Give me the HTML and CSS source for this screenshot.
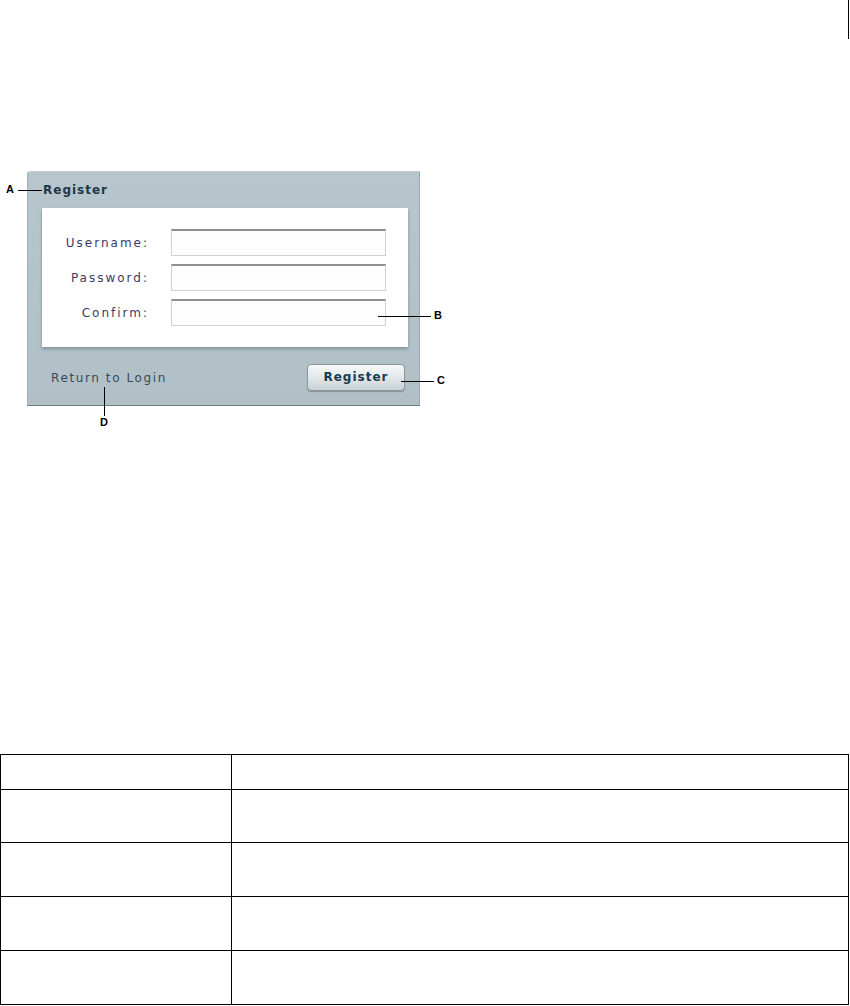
FILE: index.html
```html
<!DOCTYPE html>
<html lang="en">
<head>
    <meta charset="UTF-8">
    <meta name="viewport" content="width=device-width, initial-scale=1.0">
    <title>Register</title>
    <link rel="stylesheet" href="styles.css">
</head>
<body>

    <!-- page edge mark -->
    <div class="edge-mark"></div>

    <!-- register panel with callouts -->
    <div class="panel">
        <div class="panel-title">Register</div>

        <div class="form-box">
            <div class="form-row">
                <label class="form-label">Username:</label>
                <div class="form-input"></div>
            </div>
            <div class="form-row">
                <label class="form-label">Password:</label>
                <div class="form-input"></div>
            </div>
            <div class="form-row">
                <label class="form-label">Confirm:</label>
                <div class="form-input"></div>
            </div>
        </div>

        <div class="panel-footer">
            <span class="return-link">Return to Login</span>
            <div class="register-btn">Register</div>
        </div>

        <!-- callouts -->
        <span class="callout callout-a">A</span>
        <span class="line line-a"></span>
        <span class="callout callout-b">B</span>
        <span class="line line-b"></span>
        <span class="callout callout-c">C</span>
        <span class="line line-c"></span>
        <span class="callout callout-d">D</span>
        <span class="line line-d"></span>
    </div>

    <!-- description table -->
    <table class="parts">
        <tr class="head-row"><td class="col-a"></td><td></td></tr>
        <tr class="row-short"><td class="col-a"></td><td></td></tr>
        <tr class="body-row"><td class="col-a"></td><td></td></tr>
        <tr class="body-row"><td class="col-a"></td><td></td></tr>
        <tr class="body-row"><td class="col-a"></td><td></td></tr>
    </table>

</body>
</html>
```

FILE: styles.css
```css
body {
    margin: 0;
    background: #fff;
    position: relative;
    font-family: 'DejaVu Sans', Verdana, sans-serif;
}

.edge-mark {
    position: absolute;
    left: 848px;
    top: 0;
    width: 1px;
    height: 39px;
    background: #000;
}

.panel {
    position: relative;
    box-sizing: border-box;
    width: 393px;
    height: 235px;
    margin: 171px 0 0 27px;
    padding: 10px 13px 0 14px;
    background: linear-gradient(180deg, #b7c6cd 0%, #b1c0c7 100%);
    border-left: 1px solid #a2b1b8;
    border-right: 1px solid #98a7ae;
    border-bottom: 1px solid #6e7c84;
    border-top: 1px solid #c3cfd4;
    border-radius: 3px 0 0 0;
}

.panel-title {
    height: 17px;
    line-height: 17px;
    margin-left: 1px;
    font-size: 12px;
    font-weight: bold;
    letter-spacing: 1px;
    color: #1e3847;
}

.form-box {
    box-sizing: border-box;
    width: 366px;
    height: 139px;
    margin-top: 9px;
    padding-top: 21px;
    background: #fff;
    box-shadow: 0 2px 3px rgba(40, 55, 65, 0.35);
    display: flex;
    flex-direction: column;
    gap: 8px;
}

.form-row {
    display: flex;
    align-items: center;
}

.form-label {
    width: 107px;
    text-align: right;
    margin-right: 22px;
    font-size: 12px;
    letter-spacing: 2px;
    color: #3c3a66;
}

.form-input {
    box-sizing: border-box;
    width: 215px;
    height: 27px;
    background: #fdfdfd;
    border: 1px solid #cfd1d2;
    border-top: 2px solid #8e9193;
}

.panel-footer {
    display: flex;
    justify-content: space-between;
    align-items: center;
    margin-top: 17px;
}

.return-link {
    margin-left: 9px;
    font-size: 12px;
    letter-spacing: 1.6px;
    color: #3a4a56;
}

.register-btn {
    box-sizing: border-box;
    width: 98px;
    height: 27px;
    margin-right: 1px;
    line-height: 25px;
    text-align: center;
    font-size: 12px;
    font-weight: bold;
    letter-spacing: 1px;
    color: #1b3a4d;
    background: linear-gradient(180deg, #f6f8f8 0%, #e2e8ea 50%, #c8d1d5 100%);
    border: 1px solid #8a979e;
    border-radius: 4px;
    box-shadow: 0 1px 1px rgba(0, 0, 0, 0.25);
}

/* callouts */
.callout {
    position: absolute;
    font-family: 'Liberation Sans', Arial, sans-serif;
    font-size: 11px;
    font-weight: bold;
    color: #000;
    line-height: 11px;
}

.line {
    position: absolute;
    background: #000;
}

.callout-a { left: -22px; top: 12px; }
.line-a { left: -10px; top: 18px; width: 24px; height: 1px; }

.callout-b { left: 406px; top: 138px; }
.line-b { left: 350px; top: 144px; width: 53px; height: 1px; }

.callout-c { left: 409px; top: 203px; }
.line-c { left: 373px; top: 209px; width: 33px; height: 1px; }

.callout-d { left: 72px; top: 245px; }
.line-d { left: 76px; top: 215px; width: 1px; height: 29px; }

/* table */
.parts {
    width: 849px;
    margin-top: 348px;
    border-collapse: collapse;
}

.parts td {
    border: 1px solid #000;
    padding: 0;
}

.parts .col-a {
    width: 230px;
}

.head-row td {
    height: 34px;
}

.row-short td {
    height: 52px;
}

.body-row td {
    height: 53px;
}
```
